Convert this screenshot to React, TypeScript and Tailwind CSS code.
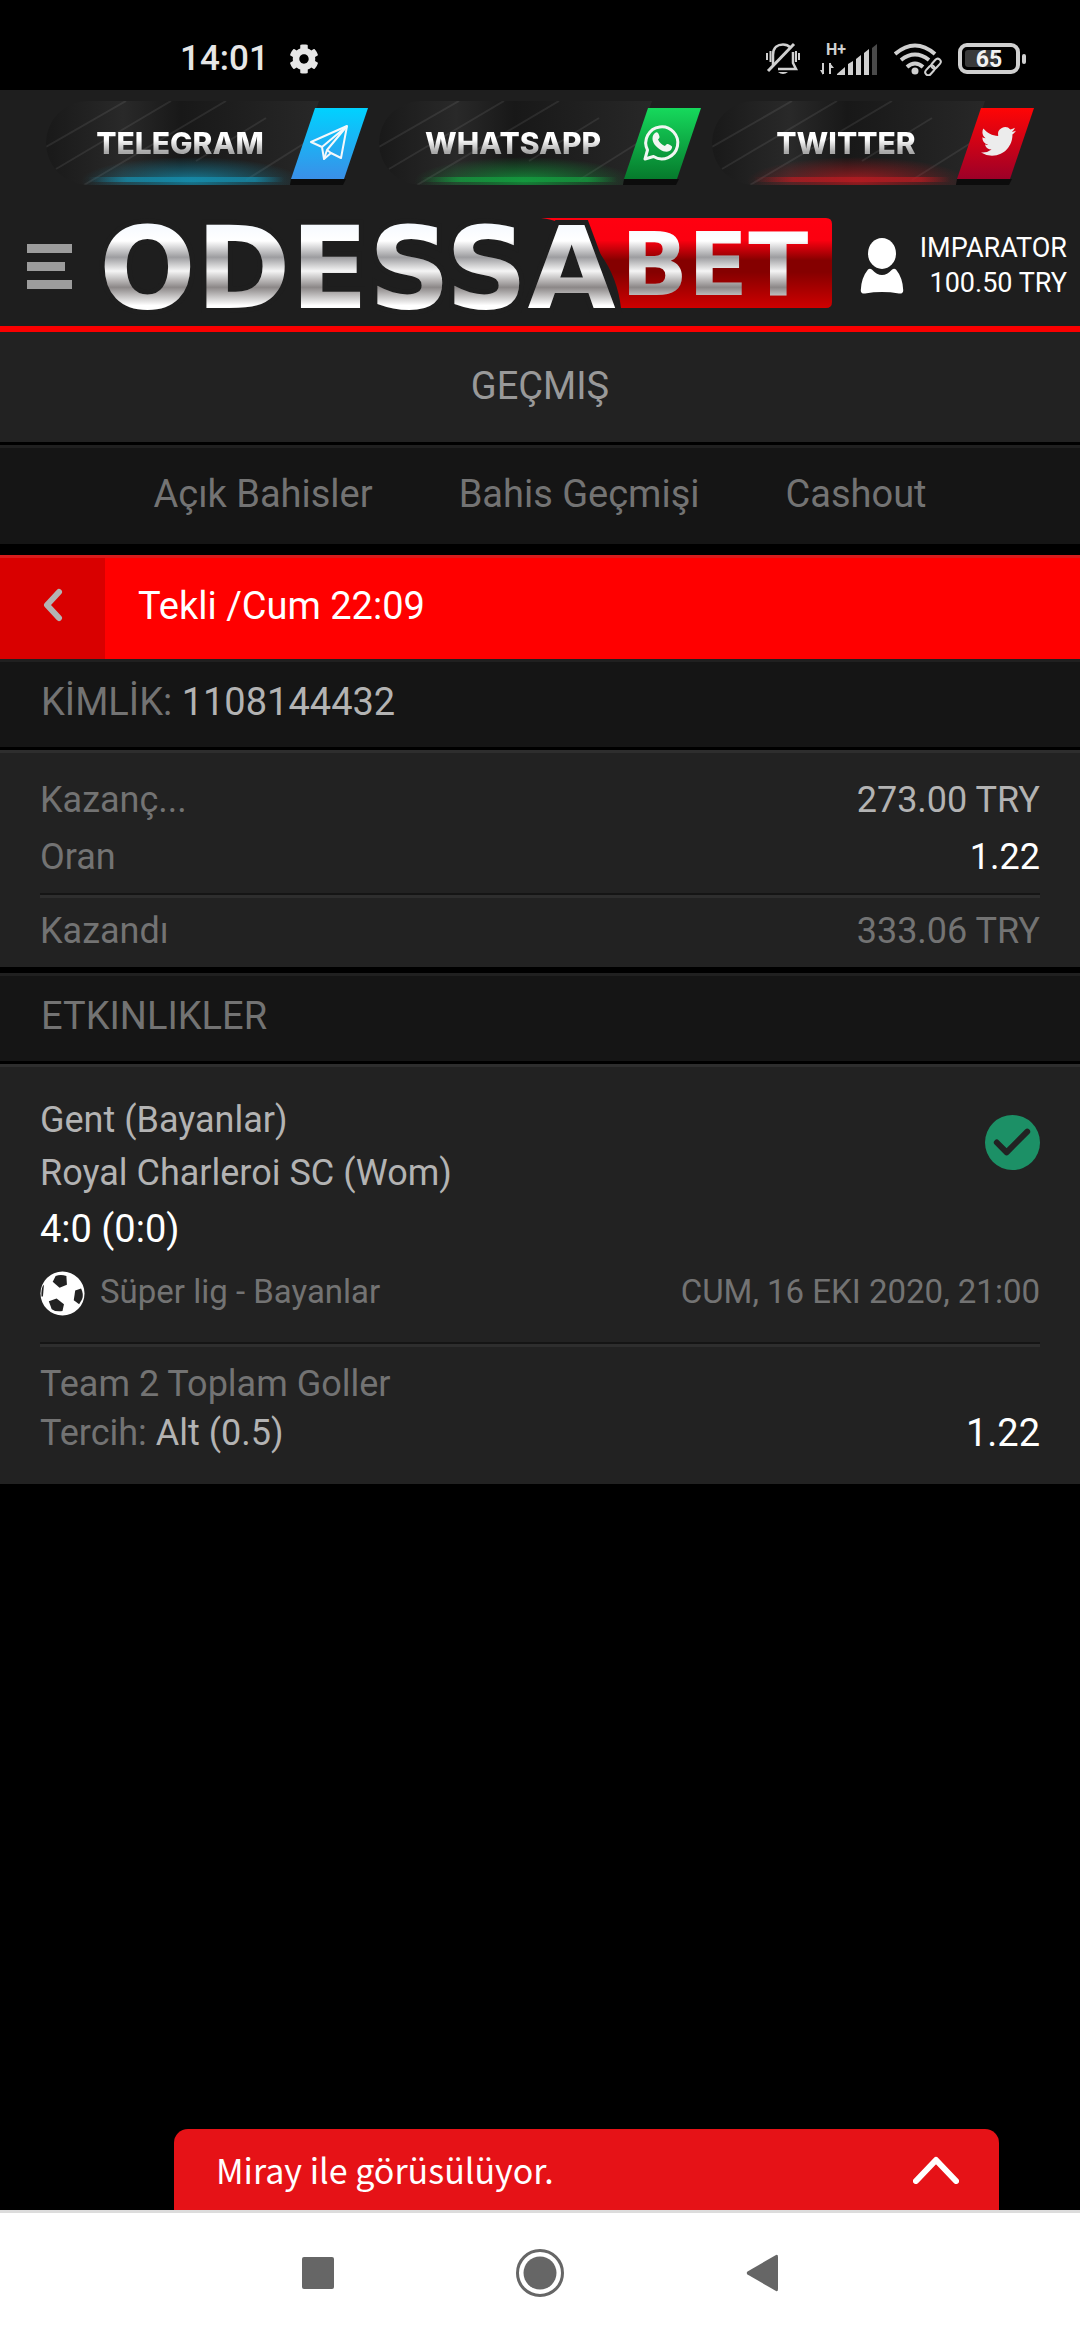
import { FaCog } from "react-icons/fa";

const tabs = ["Açık Bahisler", "Bahis Geçmişi", "Cashout"];

const socials = [
  { name: "TELEGRAM", from: "#00d2ff", to: "#3a8fe8", glow: "#1690b0" },
  { name: "WHATSAPP", from: "#16d95c", to: "#067a2c", glow: "#14a040" },
  { name: "TWITTER", from: "#ff0505", to: "#9c0028", glow: "#b81c22" },
];

function SocialIcon({ name }: { name: string }) {
  if (name === "TELEGRAM") {
    return (
      <g fill="none" stroke="#f4f8fb" strokeWidth="2" strokeLinejoin="round">
        <path d="M301 25 L265 41 L276 46 L278 58 L285 52 L295 57 Z" />
        <path d="M301 25 L276 46 M301 25 L281 49 L285 52 M281 49 L278 58" />
      </g>
    );
  }
  if (name === "WHATSAPP") {
    return (
      <g transform="translate(5 -3)">
        <path
          d="M261 61 L263.500 52 A16 16 0 1 1 269.500 58.500 Z"
          fill="none"
          stroke="#f2f6f3"
          strokeWidth="3"
          strokeLinejoin="round"
        />
        <path
          d="M271 35 c2 -1.500 3 -.5 4 2 c1 2.500 .5 3 -1 4.500 c1.500 3 4 5.500 7 6.500 c2 -2.500 2.500 -2.500 5 -1 c2.500 1.300 2.500 2 1.500 4 c-2 3.500 -7 3.500 -11.500 .5 c-4.500 -3 -7.500 -7 -7.500 -11 c0 -2.500 1 -4.500 2.500 -5.500 z"
          fill="#f2f6f3"
        />
      </g>
    );
  }
  return (
    <svg x="269" y="23" width="35" height="35" viewBox="0 0 24 24">
      <path
        fill="#ececec"
        d="M23.953 4.570a10 10 0 01-2.825.775 4.958 4.958 0 002.163-2.723c-.951.555-2.005.959-3.127 1.184a4.920 4.920 0 00-8.384 4.482C7.690 8.095 4.067 6.130 1.640 3.162a4.822 4.822 0 00-.666 2.475c0 1.710.870 3.213 2.188 4.096a4.904 4.904 0 01-2.228-.616v.060a4.923 4.923 0 003.946 4.827 4.996 4.996 0 01-2.212.085 4.936 4.936 0 004.604 3.417 9.867 9.867 0 01-6.102 2.105c-.390 0-.779-.023-1.170-.067a13.995 13.995 0 007.557 2.209c9.053 0 13.998-7.496 13.998-13.985 0-.210 0-.420-.015-.630A9.935 9.935 0 0024 4.590z"
      />
    </svg>
  );
}

function SocialLink({ name, from, to, glow }: (typeof socials)[number]) {
  const id = name.toLowerCase();
  return (
    <a href={`#${id}`} className="relative flex h-[84px] w-[322px] items-center">
      <svg viewBox="0 0 322 84" className="absolute inset-0 h-full w-full" aria-hidden="true">
        <defs>
          <linearGradient id={`${id}-tile`} x1="0" y1="0" x2="0" y2="1">
            <stop offset="0" stopColor={from} />
            <stop offset="1" stopColor={to} />
          </linearGradient>
          <linearGradient id={`${id}-body`} x1="0" y1="0" x2="1" y2="0">
            <stop offset="0" stopColor="#191919" />
            <stop offset=".24" stopColor="#292929" />
            <stop offset=".42" stopColor="#181818" />
            <stop offset="1" stopColor="#2d2d2d" />
          </linearGradient>
          <radialGradient id={`${id}-glow`}>
            <stop offset="0" stopColor={glow} stopOpacity=".8" />
            <stop offset=".5" stopColor={glow} stopOpacity=".4" />
            <stop offset="1" stopColor={glow} stopOpacity="0" />
          </radialGradient>
          <linearGradient id={`${id}-line`}>
            <stop offset="0" stopColor={glow} stopOpacity="0" />
            <stop offset=".2" stopColor={glow} stopOpacity=".7" />
            <stop offset=".85" stopColor={glow} stopOpacity=".7" />
            <stop offset="1" stopColor={glow} stopOpacity="0" />
          </linearGradient>
          <clipPath id={`${id}-clip`}>
            <path d="M42 0 H273 L244 84 H42 A42 42 0 0 1 42 0 Z" />
          </clipPath>
        </defs>
        <g clipPath={`url(#${id}-clip)`}>
          <rect width="322" height="84" fill={`url(#${id}-body)`} />
          <path
            d="M0 46 L80 0 M10 68 L125 0 M38 84 L180 0 M150 60 L220 17 M200 79 L262 40"
            stroke="#fff"
            strokeOpacity=".08"
            strokeWidth="2"
          />
          <ellipse cx="145" cy="80" rx="110" ry="24" fill={`url(#${id}-glow)`} />
          <rect x="42" y="76" width="196" height="5" fill={`url(#${id}-line)`} />
        </g>
        <path d="M245 78 H300 L297 84 H244 Z" fill="#0c0c0c" />
        <path d="M269 7 H322 L298 78 H245 Z" fill={`url(#${id}-tile)`} />
        <SocialIcon name={name} />
      </svg>
      <span className="relative w-[268px] bg-gradient-to-b from-white from-40% to-[#a8a8a8] to-75% bg-clip-text text-center font-[Inter] text-[30px] leading-[36px] font-extrabold text-transparent">
        {name}
      </span>
    </a>
  );
}

function Logo() {
  return (
    <svg viewBox="0 0 728 90" className="h-[90px] w-[728px] shrink-0 overflow-visible" role="img" aria-label="ODESSABET">
      <defs>
        <linearGradient id="metal" gradientUnits="userSpaceOnUse" x1="0" y1="4" x2="0" y2="90">
          <stop offset="0" stopColor="#f4f9ff" />
          <stop offset=".22" stopColor="#ffffff" />
          <stop offset=".41" stopColor="#9d9da0" />
          <stop offset=".57" stopColor="#f5f5f5" />
          <stop offset=".76" stopColor="#8c8888" />
          <stop offset=".97" stopColor="#ffffff" />
        </linearGradient>
        <linearGradient id="plate" x1="0" y1="0" x2="0" y2="1">
          <stop offset="0" stopColor="#ff0010" />
          <stop offset=".25" stopColor="#fb0010" />
          <stop offset=".47" stopColor="#850000" />
          <stop offset=".6" stopColor="#850000" />
          <stop offset="1" stopColor="#cf0000" />
        </linearGradient>
      </defs>
      <path d="M436 0 H721 Q727 0 727 6 V84 Q727 90 721 90 H516 C512 50 484 6 436 0 Z" fill="url(#plate)" />
      <g fontFamily="DejaVu Sans" fontWeight="bold" fill="url(#metal)">
        <text x="-6" y="90" fontSize="114" stroke="#1e1e1e" strokeWidth="10" style={{ paintOrder: "stroke" }}>
          ODESSA
        </text>
        <text x="516" y="77" fontSize="88">BET</text>
      </g>
    </svg>
  );
}

function Divider() {
  return <div className="h-[5px] border-t-2 border-[#151515] bg-[#2e2e2e]" />;
}

function StatusBar() {
  return (
    <div className="flex h-[90px] items-center justify-between bg-black pt-[28px] pr-[54px] pl-[180px] text-[#e6e6e6]">
      <div className="flex items-center gap-[20px]">
        <span className="text-[35px] leading-[40px] font-medium">14:01</span>
        <FaCog className="size-[30px]" />
      </div>
      <div className="flex items-center gap-[16px] text-[#d0d0d0]">
        <svg viewBox="0 0 34 34" className="mr-[4px] h-[34px] w-[34px]" fill="none" stroke="currentColor" strokeWidth="2.500">
          <path d="M7 23 V13 C7 5 12 2.500 17 2.500 C20 2.500 22.500 3.500 24.500 5.500 M27 10 V21 L30 27 H12" />
          <path d="M2 29 L28 2" strokeWidth="3" />
          <path d="M1 11 V18 M4.500 9 V20 M33 11 V18 M30 9 V20" strokeWidth="2" />
          <path d="M12 30 H22 Q17 34 12 30 Z" fill="currentColor" stroke="none" />
        </svg>
        <svg viewBox="0 0 58 33" className="h-[33px] w-[58px] overflow-visible" fill="currentColor">
          <text x="6" y="12" fontSize="16" fontFamily="Roboto" fontWeight="700">H+</text>
          <path d="M3 20 V31 M10 31 V20" stroke="currentColor" strokeWidth="2" />
          <path d="M0 27 L3 32 V27 Z M10 20 L14 25 H10 Z" />
          <path d="M17 32 V31 L25 24 V32 Z M28 21 L33 18 V32 H28 Z M36 16 L41 12 V32 H36 Z M44 10 L49 6 V32 H44 Z" />
          <path d="M52 5 L57 1 V32 H52 Z" fill="#4a4a4a" />
        </svg>
        <svg viewBox="0 0 48 33" className="h-[33px] w-[48px]" fill="none" stroke="currentColor" strokeWidth="4">
          <path d="M1 11 Q21 -6 41 11" />
          <path d="M7 17 Q21 6 35 17" />
          <path d="M13 24 Q21 17 29 24" />
          <circle cx="21" cy="28" r="3.500" fill="currentColor" stroke="none" />
          <g strokeWidth="2" transform="rotate(-48 39 24)">
            <rect x="29" y="21" width="11" height="6" rx="3" />
            <rect x="38" y="21" width="11" height="6" rx="3" />
          </g>
        </svg>
        <svg viewBox="0 0 68 32" className="h-[32px] w-[68px]">
          <rect x="2" y="2" width="58" height="27" rx="7" fill="none" stroke="currentColor" strokeWidth="4" />
          <rect x="7" y="7" width="32" height="17" rx="3" fill="#3a3a3a" />
          <rect x="64" y="11" width="4" height="10" rx="2" fill="currentColor" />
          <text x="31" y="24" textAnchor="middle" fontSize="23" fontFamily="Roboto" fontWeight="700" fill="#f2f2f2">65</text>
        </svg>
      </div>
    </div>
  );
}

export default function App() {
  return (
    <div className="flex min-h-screen flex-col bg-black font-[Roboto,sans-serif] text-[#737373]">
      <StatusBar />

      {/* Header */}
      <header className="border-b-6 border-[#fa0000] bg-[#1e1e1e] pt-[11px]">
        <div className="flex justify-center gap-[11px]">
          {socials.map((s) => (
            <SocialLink key={s.name} {...s} />
          ))}
        </div>
        <div className="mt-[33px] flex h-[108px] items-start pr-[13px] pl-[27px]">
          <button aria-label="Menü" className="mt-[26px] mr-[33px] flex w-[45px] shrink-0 flex-col gap-[9px]">
            <span className="h-[9px] w-full bg-[#9c9c9c]" />
            <span className="h-[9px] w-[38px] bg-[#9c9c9c]" />
            <span className="h-[9px] w-full bg-[#9c9c9c]" />
          </button>
          <Logo />
          <a href="#account" className="mt-[13px] ml-auto flex items-center gap-[16px] text-white">
            <svg viewBox="0 0 45 58" className="h-[56px] w-[44px]" fill="currentColor" aria-hidden="true">
              <ellipse cx="22.500" cy="16" rx="14.500" ry="16" />
              <path d="M8 32.500 Q10 31 12 32.500 Q22.500 44 33 32.500 Q35 31 37 32.500 Q44 41 44.500 54 Q44.500 58 40 57.500 Q22.500 54.500 5 57.500 Q0.500 58 .5 54 Q1 41 8 32.500 Z" />
            </svg>
            <span className="text-right text-[27px] leading-[35px]">
              IMPARATOR
              <br />
              100.50 TRY
            </span>
          </a>
        </div>
      </header>

      <h1 className="flex h-[110px] items-center justify-center bg-[#222] pb-[2px] text-[38px] leading-[46px] text-[#999]">
        GEÇMIŞ
      </h1>

      <nav className="mt-[3px] flex h-[99px] justify-center gap-[86px] border-t-3 border-[#202020] bg-[#151515] pt-[23px] text-[38px] leading-[46px]">
        {tabs.map((tab) => (
          <a key={tab} href="#history">
            {tab}
          </a>
        ))}
      </nav>

      {/* Bet slip */}
      <div className="mt-[11px] flex h-[104px] border-t-3 border-[#d81c1c] bg-[#ff0000] text-[38px] leading-[46px] text-white">
        <button aria-label="Geri" className="flex w-[105px] items-center justify-center bg-[#d90000] pb-[7px]">
          <svg viewBox="0 0 20 34" className="h-[34px] w-[20px]" fill="none" stroke="#b3b3b3" strokeWidth="6" strokeLinecap="round" strokeLinejoin="round">
            <path d="M16 4 L4 17 L16 30" />
          </svg>
        </button>
        <h2 className="pt-[25px] pl-[33px]">Tekli /Cum 22:09</h2>
      </div>

      <div className="h-[88px] border-t-3 border-[#202020] bg-[#151515] px-[41px] pt-[17px] text-[38px] leading-[46px]">
        KİMLİK: <span className="text-[#b3b3b3]">1108144432</span>
      </div>

      <div className="mt-[3px] h-[217px] border-t-3 border-[#2e2e2e] bg-[#222] px-[40px] pt-[26px] text-[36px] leading-[42px]">
        <div className="flex justify-between">
          <span>Kazanç...</span>
          <span className="text-[#b3b3b3]">273.00 TRY</span>
        </div>
        <div className="my-[15px] flex justify-between">
          <span>Oran</span>
          <span className="text-white">1.22</span>
        </div>
        <Divider />
        <div className="mt-[12px] flex justify-between">
          <span>Kazandı</span>
          <span>333.06 TRY</span>
        </div>
      </div>

      <h3 className="mt-[6px] h-[88px] border-t-3 border-[#202020] bg-[#151515] px-[41px] pt-[17px] text-[38px] leading-[46px]">
        ETKINLIKLER
      </h3>

      <div className="mt-[3px] border-t-3 border-[#2e2e2e] bg-[#222] px-[40px] pt-[27px] pb-[26px] text-[36px]">
        <div className="flex justify-between">
          <div className="text-[#b3b3b3]">
            <div className="leading-[53px]">Gent (Bayanlar)</div>
            <div className="leading-[53px]">Royal Charleroi SC (Wom)</div>
            <div className="text-[38px] leading-[58px] text-white">4:0 (0:0)</div>
          </div>
          <svg viewBox="0 0 56 56" className="mt-[21px] size-[55px]">
            <circle cx="28" cy="28" r="28" fill="#1c9066" />
            <path d="M12 28 L22 38 L43 17" fill="none" stroke="#222" strokeWidth="6" strokeLinecap="round" strokeLinejoin="round" />
          </svg>
        </div>
        <div className="mt-[13px] mb-[26px] flex items-start text-[33px] leading-[42px]">
          <svg viewBox="0 0 46 46" className="mr-[15px] size-[45px]">
            <circle cx="23" cy="23" r="22.500" fill="#fff" />
            <g fill="#222">
              <path d="M16 5 Q21 3 27 5 L27.500 14 L20 17 L13 11 Z" />
              <path d="M17 28 L24.500 34 L23 41 Q16 42 12 39 L9 31 Z" />
              <path d="M36 20 L42 18 Q45 24 43 29 L40 34 L34.500 30 Z" />
              <path d="M4 14 L3 26 L1.500 26 Q1 19 3 15 Z" />
            </g>
          </svg>
          <span className="grow">Süper lig - Bayanlar</span>
          <span>CUM, 16 EKI 2020, 21:00</span>
        </div>
        <Divider />
        <div className="mt-[13px] leading-[49px]">Team 2 Toplam Goller</div>
        <div className="flex justify-between leading-[49px]">
          <span>
            Tercih: <span className="text-[#b3b3b3]">Alt (0.5)</span>
          </span>
          <span className="text-[38px] text-white">1.22</span>
        </div>
      </div>

      {/* Chat bar, docked above the system buttons */}
      <button className="mt-auto mr-[81px] ml-[174px] flex h-[81px] items-center justify-between rounded-t-[14px] bg-[#e61217] pr-[40px] pl-[42px] font-['Noto_Sans_CJK_SC',sans-serif] text-[34px] text-white">
        Miray ile görüsülüyor.
        <svg viewBox="0 0 46 28" className="h-[28px] w-[46px]" fill="none" stroke="currentColor" strokeWidth="6" strokeLinecap="round" strokeLinejoin="round">
          <path d="M3 25 L23 4 L43 25" />
        </svg>
      </button>

      <div className="flex h-[130px] items-center justify-center gap-[182px] border-t-3 border-[#dcdcdc] bg-white pb-[8px] text-[#666]">
        <button aria-label="Son uygulamalar" className="size-[32px] rounded-[2px] bg-current" />
        <button aria-label="Ana ekran">
          <svg viewBox="0 0 48 48" className="size-[48px]">
            <circle cx="24" cy="24" r="22.500" fill="none" stroke="currentColor" strokeWidth="3" />
            <circle cx="24" cy="24" r="16.500" fill="currentColor" />
          </svg>
        </button>
        <button aria-label="Geri">
          <svg viewBox="0 0 32 38" className="h-[38px] w-[32px]" fill="currentColor">
            <path d="M30 1 Q32 0 32 3 V35 Q32 38 30 37 L1.500 20.500 Q0 19 1.500 17.500 Z" />
          </svg>
        </button>
      </div>
    </div>
  );
}
